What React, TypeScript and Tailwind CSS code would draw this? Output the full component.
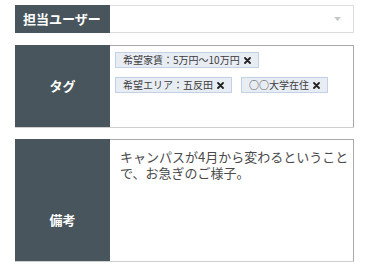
import React from "react";

type Tag = { id: number; label: string };

const tags: Tag[] = [
  { id: 1, label: "希望家賃：5万円〜10万円" },
  { id: 2, label: "希望エリア：五反田" },
  { id: 3, label: "○○大学在住" },
];

function RemoveIcon() {
  return (
    <svg width="7" height="7" viewBox="0 0 7 7" className="ml-[4px]">
      <path d="M1 1L6 6M6 1L1 6" stroke="#222" strokeWidth="1.8" strokeLinecap="round" />
    </svg>
  );
}

export default function App() {
  return (
    <div className="w-[369px] h-[279px] bg-white px-[15px] pt-[5px] font-['Noto_Sans_CJK_JP',sans-serif] overflow-hidden">
      {/* 担当ユーザー */}
      <div className="flex h-[28px]">
        <div className="w-[95px] bg-[#48555c] flex items-center pl-[8px] text-[13px] font-bold text-white">
          担当ユーザー
        </div>
        <div className="flex-1 border border-[#dcdcdc] border-l-0 flex items-center justify-end pr-[12px]">
          <svg width="7" height="4" viewBox="0 0 7 4">
            <path d="M0 0H7L3.5 4Z" fill="#c4c8cc" />
          </svg>
        </div>
      </div>

      {/* タグ */}
      <div className="flex h-[83px] mt-[12px] border-b border-[#cfcfcf]">
        <div className="w-[95px] bg-[#48555c] flex items-center justify-center text-[13px] font-bold text-white">
          タグ
        </div>
        <div className="flex-1 border border-b-0 border-[#a9a9a9] border-l-0 pl-[5px] pt-[6px] pr-[4px]">
          <div className="flex flex-wrap gap-x-[9px] gap-y-[9px]">
            {tags.map((tag) => (
              <span
                key={tag.id}
                className="inline-flex items-center h-[16px] px-[7px] bg-[#e8edf4] border border-[#c3d1e6] text-[10px] leading-none text-[#3c3c3c]"
              >
                {tag.label}
                <RemoveIcon />
              </span>
            ))}
          </div>
        </div>
      </div>

      {/* 備考 */}
      <div className="flex h-[123px] mt-[11px] border-b border-[#cfcfcf]">
        <div className="w-[95px] bg-[#48555c] flex items-center justify-center pt-[40px] text-[13px] font-bold text-white">
          備考
        </div>
        <div className="flex-1 border border-b-0 border-l-0 border-[#a9a9a9] pl-[10px] pr-[4px] pt-[9px] text-[13px] leading-[1.2] text-[#4a4a4a]">
          キャンパスが4月から変わるということで、お急ぎのご様子。
        </div>
      </div>
    </div>
  );
}
